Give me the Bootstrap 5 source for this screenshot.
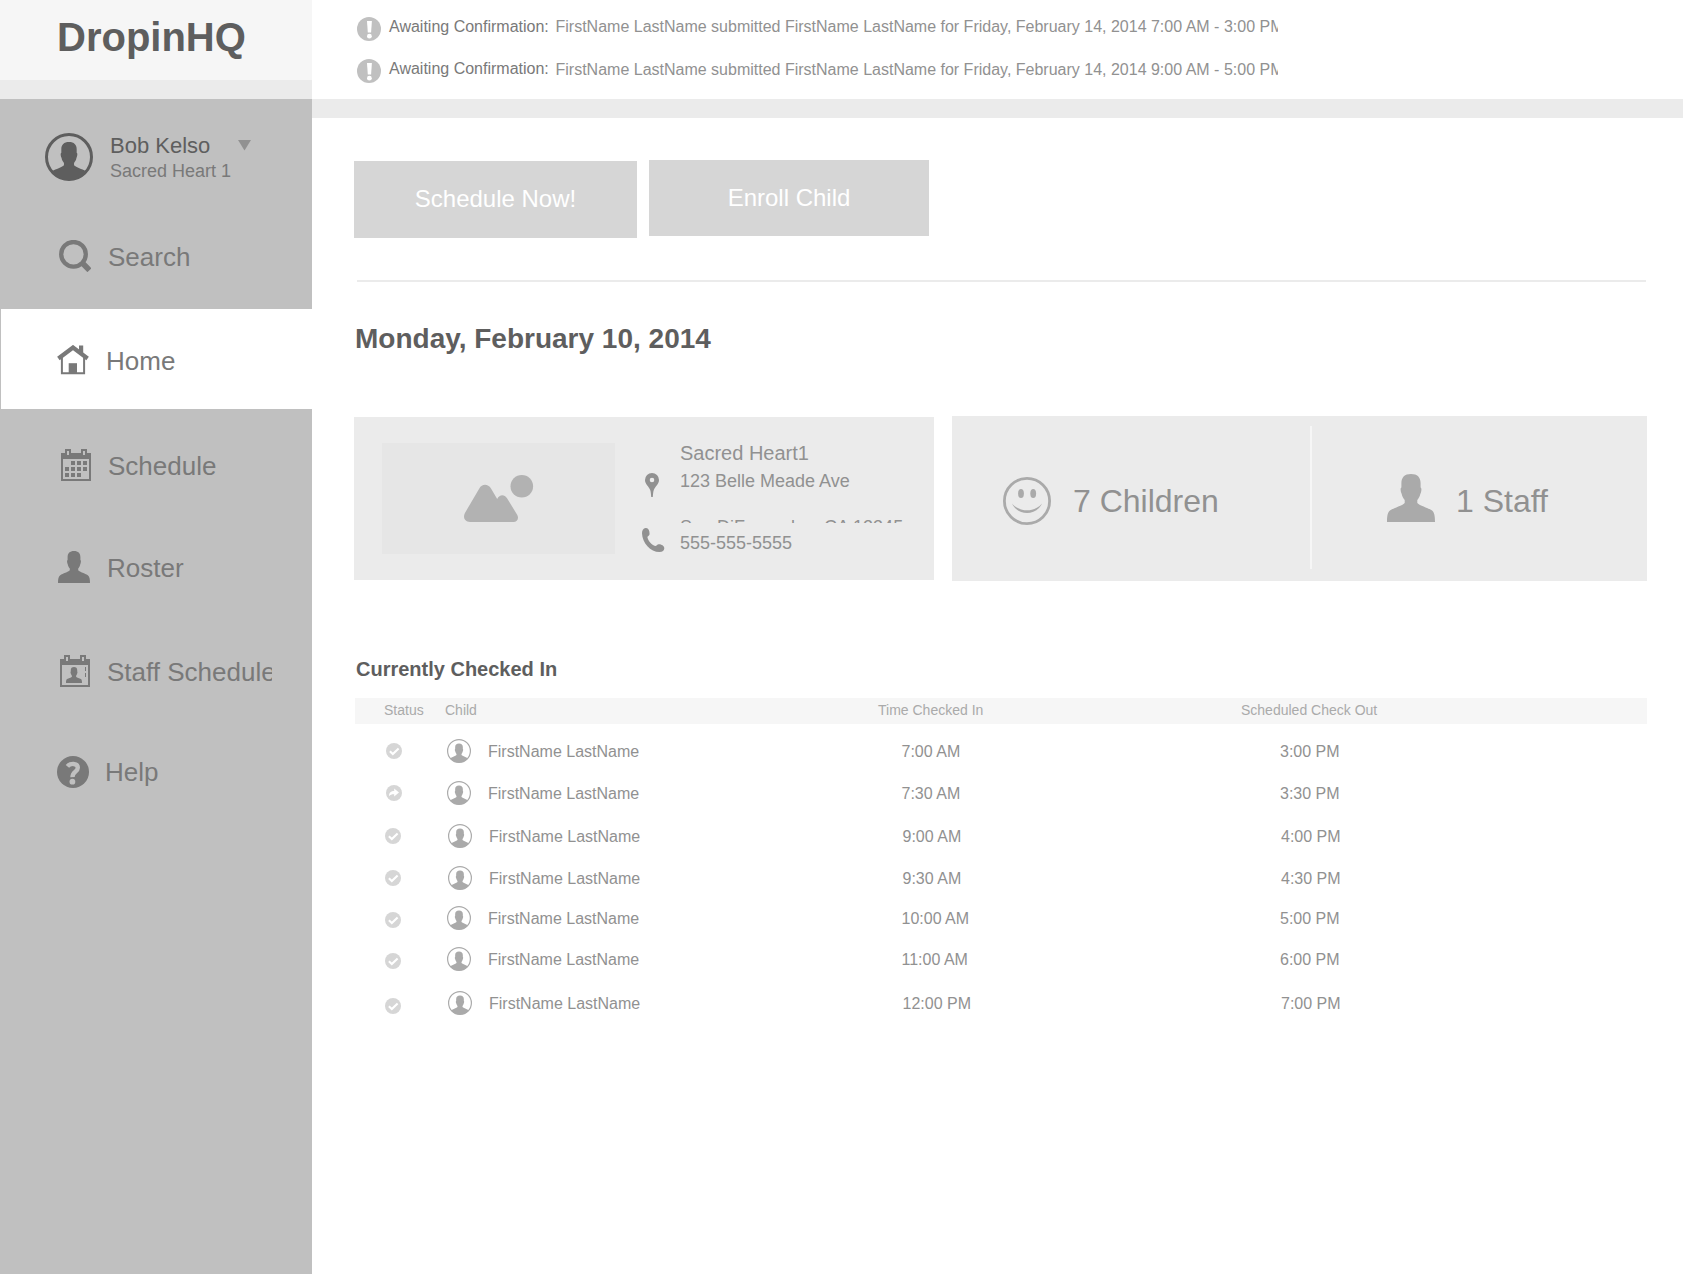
<!DOCTYPE html>
<html lang="en">
<head>
<meta charset="utf-8">
<meta name="viewport" content="width=device-width, initial-scale=1">
<title>DropinHQ</title>
<link href="https://cdn.jsdelivr.net/npm/bootstrap@5.3.0/dist/css/bootstrap.min.css" rel="stylesheet">
<style>
  body { font-family: "Liberation Sans", Arial, sans-serif; color: #919191; background: #fff; }
  svg { display: block; flex: none; }
  /* text sizes, each with its natural line height */
  .t14 { font-size: 14px; line-height: 16px; }
  .t16 { font-size: 16px; line-height: 17px; }
  .t18 { font-size: 18px; line-height: 20px; }
  .t20 { font-size: 20px; line-height: 22px; }
  .t22 { font-size: 22px; line-height: 25px; }
  .t24 { font-size: 24px; line-height: 27px; }
  .t26 { font-size: 26px; line-height: 30px; }
  .t28 { font-size: 28px; line-height: 31px; }
  .t32 { font-size: 32px; line-height: 36px; }
  .t40 { font-size: 40px; line-height: 44px; }
  .ink-dark { color: #5e5e5e; }
  .ink-mid { color: #797979; }

  .sidebar { width: 312px; background: #c0c0c0; }
  .brand { height: 80px; padding: 15px 0 0 57px; background: #f6f6f6; }
  .strip { height: 19px; background: #ebebeb; }
  .user { height: 111px; padding: 34px 0 0 45px; }
  .user-name { margin-left: 17px; }
  .user-site { margin-top: 3px; }
  .caret { margin: 7px 0 0 28px; color: #919191; }

  .side-link { height: 100px; padding: 0 40px 0 var(--x); color: #797979; white-space: nowrap; }
  .side-link:hover { color: #797979; }
  .side-link svg { margin-top: var(--iy); }
  .side-link span { margin: var(--ty) 0 0 var(--gap); overflow: hidden; flex: 1; }
  .l-search { height: 99px; --x: 59px; --iy: 30px; --ty: 32px; --gap: 17px; }
  .l-home { background: #fff; margin-left: 1px; --x: 56px; --iy: 36px; --ty: 37px; --gap: 17px; }
  .l-sched { height: 101px; --x: 61px; --iy: 40px; --ty: 42px; --gap: 17px; }
  .l-roster { height: 102px; --x: 58px; --iy: 41px; --ty: 43px; --gap: 17px; }
  .l-staff { height: 103px; --x: 60px; --iy: 43px; --ty: 45px; --gap: 17px; }
  .l-help { --x: 56.5px; --iy: 40.5px; --ty: 42px; --gap: 16.5px; }

  .notices { height: 99px; padding: 16px 0 0 44.5px; }
  .notice { height: 42px; }
  .notice svg { color: #c0c0c0; margin-top: .5px; }
  .notice-label { width: 166.5px; margin: 2px 0 0 8.5px; }
  .notice-text { width: 722.5px; margin-top: 2px; overflow: hidden; white-space: nowrap; }
  .notice + .notice .notice-text { margin-top: 3px; }

  .content { padding: 42px 36px 0 42px; }
  .actions { gap: 12px; }
  .action { --bs-btn-color: #fff; --bs-btn-bg: #d6d6d6; --bs-btn-border-width: 0; --bs-btn-hover-bg: #cacaca; --bs-btn-hover-color: #fff; --bs-btn-padding-y: 0; --bs-btn-border-radius: 0; }
  .btn.action { font-size: 24px; line-height: 27px; }
  .a-now { width: 283px; height: 77px; margin-top: 1px; padding-bottom: 2px; }
  .a-enroll { width: 280px; height: 76px; padding-bottom: 2px; }
  .rule { height: 2px; margin: 42px 1px 0 3px; background: #ebebeb; }
  .date { margin: 41px 0 0 1px; }

  .panels { margin: 62px 0 0; gap: 18px; }
  .panel { background: #ebebeb; }
  .site { width: 580px; height: 163px; margin-top: 1px; padding: 26px 0 0 28px; }
  .photo { width: 233px; height: 111px; background: #e6e6e6; padding: 14.5px 0 0 82px; }
  .contact { padding-left: 27px; }
  .contact svg { margin-top: 30px; margin-left: 3px; }
  .contact svg + svg { margin-top: 31px; margin-left: 0; }
  .address { padding-left: 15px; margin-top: -1px; white-space: nowrap; }
  .line-a { margin-top: 7px; }
  /* only the tops of the letters show on this line */
  .line-b { height: 6px; margin-top: 26px; overflow: hidden; }
  .line-c { margin-top: 10px; }
  .totals { width: 695px; height: 165px; }
  .total { padding-top: 58px; }
  .total span { margin-top: 9px; }
  .kids { width: 358px; padding-left: 51px; padding-top: 61px; }
  .kids span { margin: 6px 0 0 22px; }
  .staffers { padding-left: 74.5px; }
  .staffers span { margin-left: 21.5px; }
  .split { width: 2px; height: 143px; margin-top: 10px; background: #f6f6f6; }
  .panel svg { color: #b2b2b2; }
  .totals svg { color: #aaa; }
  .contact svg { color: #919191; }

  .list-title { margin: 77px 0 0 2px; }
  .list-head { height: 26px; margin: 18px 0 15px 1px; padding: 4px 0 0 29px; background: #f6f6f6; color: #aaa; }
  .cols { display: grid; grid-template-columns: 61px 433px 363px 1fr; }
  .entry { display: grid; grid-template-columns: 62px 41px 413.5px 378.5px 1fr; height: 42px; padding-left: 31px; }
  .entry > span, .entry > div { margin-top: 4px; }
  .entry > .flag { color: #d6d6d6; padding-left: .5px; }
  .entry > .face { color: #aaa; margin-top: 0; }
  .nudge > :not(.flag) { margin-left: 1px; }
  .nudge > .flag, .late > .flag { margin-left: -.5px; }
  .late > .flag { margin-top: 6px; }
  .h43 { height: 43px; }
  .h40 { height: 40px; }
  .h41 { height: 41px; }
  .h44 { height: 44px; }
  .last > .flag { margin-top: 7px; }
</style>
<script src="https://cdn.jsdelivr.net/npm/bootstrap@5.3.0/dist/js/bootstrap.bundle.min.js"></script>
</head>
<body>
<svg width="0" height="0" class="position-absolute" aria-hidden="true">
  <defs>
    <path id="bust" d="M16 0C11.8 0 9.6 2.2 9.6 6V9C8.8 9.2 8.9 11.5 9.8 13.4C10.1 15 10.9 16.4 11.8 17.4V19.3C10 21.2 5 22.4 2.2 24.2C.4 25.5 0 28 0 32H32C32 28 31.6 25.5 29.8 24.2C27 22.4 22 21.2 20.2 19.3V17.4C21.1 16.4 21.9 15 22.2 13.4C23.1 11.5 23.2 9.2 22.4 9V6C22.4 2.2 20.2 0 16 0Z"/>
    <clipPath id="disc"><circle cx="24" cy="24" r="23.2"/></clipPath>
    <path id="calframe" fill-rule="evenodd" d="M0 4H4V0H10V4H20V0H26V4H30V32H0ZM2 10V30H28V10ZM6 2V6H8V2ZM22 2V6H24V2Z"/>
    <symbol id="face" viewBox="0 0 48 48"><circle cx="24" cy="24" r="22.8" fill="none" stroke="currentColor" stroke-width="2.4"/><g clip-path="url(#disc)"><use href="#bust" transform="translate(4.8 9) scale(1.2)" fill="currentColor"/></g></symbol>
    <symbol id="alert" viewBox="0 0 24 24"><circle cx="12" cy="12" r="12" fill="currentColor"/><path d="M10 3.9H14.9L14.1 15.6H10.8Z" fill="#fff"/><circle cx="12.4" cy="19.2" r="2.4" fill="#fff"/></symbol>
    <symbol id="done" viewBox="0 0 16 16"><circle cx="8" cy="8" r="8" fill="currentColor"/><path d="M3.9 8.3L6.8 11L12.6 5.4" fill="none" stroke="#fff" stroke-width="2.1"/></symbol>
    <symbol id="moved" viewBox="0 0 16 16"><circle cx="8" cy="8" r="8" fill="currentColor"/><path d="M3 11.2C3 7.6 5 6 8.2 6V3.6L13 7.6L8.2 11.6V9.3C6 9.2 4.4 9.6 3 11.2Z" fill="#fff"/></symbol>
  </defs>
</svg>

<div class="d-flex min-vh-100">
  <aside class="sidebar d-flex flex-column flex-shrink-0">
    <div class="brand t40 fw-bold ink-dark">DropinHQ</div>
    <div class="strip"></div>
    <div class="user d-flex align-items-start">
      <svg class="ink-dark" width="48" height="48" viewBox="0 0 48 48"><circle cx="24" cy="24" r="22.5" fill="none" stroke="currentColor" stroke-width="3"/><g clip-path="url(#disc)"><use href="#bust" transform="translate(4.8 9) scale(1.2)" fill="currentColor"/></g></svg>
      <div class="user-name">
        <div class="d-flex"><span class="t22 ink-dark">Bob Kelso</span>
          <svg class="caret" width="13" height="11" viewBox="0 0 13 11"><path d="M0 0H13L6.5 10.6Z" fill="currentColor"/></svg></div>
        <div class="user-site t18 ink-mid">Sacred Heart 1</div>
      </div>
    </div>
    <nav class="nav flex-column flex-nowrap t26">
      <a class="side-link l-search d-flex align-items-start text-decoration-none" href="#">
        <svg width="32" height="32" viewBox="0 0 32 32" fill="none" stroke="currentColor"><circle cx="14.5" cy="14.3" r="12.3" stroke-width="4.3"/><path d="M22.6 22.2L30.4 30.2" stroke-width="5.6"/></svg><span>Search</span></a>
      <a class="side-link l-home d-flex align-items-start text-decoration-none" href="#">
        <svg width="32" height="30" viewBox="0 0 32 30"><path d="M22 .4H26.2V10L22 7Z" fill="currentColor"/><path d="M1.4 13.5L16 2.5L30.6 13.5" fill="none" stroke="currentColor" stroke-width="4.2"/><path d="M4.9 11V28.2H27.1V11" fill="none" stroke="currentColor" stroke-width="2"/><path d="M11.7 18.2H20V28H11.7Z" fill="currentColor"/></svg><span>Home</span></a>
      <a class="side-link l-sched d-flex align-items-start text-decoration-none" href="#">
        <svg width="30" height="32" viewBox="0 0 30 32" fill="currentColor"><use href="#calframe"/><path d="M10 12h4v4h-4zM16 12h4v4h-4zM22 12h4v4h-4zM4 18h4v4H4zM10 18h4v4h-4zM16 18h4v4h-4zM22 18h4v4h-4zM4 24h4v4H4zM10 24h4v4h-4zM16 24h4v4h-4z"/></svg><span>Schedule</span></a>
      <a class="side-link l-roster d-flex align-items-start text-decoration-none" href="#">
        <svg width="32" height="32" viewBox="0 0 32 32" fill="currentColor"><use href="#bust"/></svg><span>Roster</span></a>
      <a class="side-link l-staff d-flex align-items-start text-decoration-none" href="#">
        <svg width="30" height="32" viewBox="0 0 30 32" fill="currentColor"><use href="#calframe"/><use href="#bust" transform="translate(6 12) scale(.5)"/><path d="M25 12h1v4h-1zM25 18h1v4h-1z"/></svg><span>Staff Schedule</span></a>
      <a class="side-link l-help d-flex align-items-start text-decoration-none" href="#">
        <svg width="32" height="32" viewBox="0 0 32 32"><circle cx="16" cy="16" r="16" fill="currentColor"/><path d="M10.4 10.3C13 7.2 20.8 6.6 20.8 11.8C20.8 15.8 15.3 15.6 15.5 21.2" fill="none" stroke="#c0c0c0" stroke-width="4.4"/><circle cx="15.4" cy="25.7" r="2.9" fill="#c0c0c0"/></svg><span>Help</span></a>
    </nav>
  </aside>

  <main class="flex-grow-1">
    <div class="notices">
      <div class="notice d-flex align-items-start">
        <svg width="24" height="24"><use href="#alert"/></svg>
        <div class="notice-label t16 ink-mid">Awaiting Confirmation:</div>
        <div class="notice-text t16">FirstName LastName submitted FirstName LastName for Friday, February 14, 2014 7:00 AM - 3:00 PM</div>
      </div>
      <div class="notice d-flex align-items-start">
        <svg width="24" height="24"><use href="#alert"/></svg>
        <div class="notice-label t16 ink-mid">Awaiting Confirmation:</div>
        <div class="notice-text t16">FirstName LastName submitted FirstName LastName for Friday, February 14, 2014 9:00 AM - 5:00 PM</div>
      </div>
    </div>
    <div class="strip"></div>

    <div class="content">
      <div class="actions d-flex align-items-start">
        <button type="button" class="btn action a-now">Schedule Now!</button>
        <button type="button" class="btn action a-enroll">Enroll Child</button>
      </div>
      <div class="rule"></div>
      <h1 class="date t28 fw-bold ink-dark">Monday, February 10, 2014</h1>

      <div class="panels d-flex align-items-start">
        <section class="panel site d-flex align-items-start">
          <div class="photo">
            <svg width="72" height="80" viewBox="0 0 72 80" fill="currentColor"><circle cx="57.8" cy="28.2" r="11.3"/><path d="M15.3 30.6C18 25.6 24 25.6 27 30.6L33.2 41C35.5 36.2 40.5 36.2 43 40.2L53.3 57C55.2 60.8 53 64 49.5 64H6C1 64 -1.3 60 .8 55.2Z"/></svg>
          </div>
          <div class="contact">
            <svg width="14" height="24" viewBox="0 0 14 24"><path fill="currentColor" fill-rule="evenodd" d="M7 0A7 7 0 0 0 0 7C0 11 3.8 13.5 5.2 17C6 19.5 6 22 6.2 24H7.8C8 22 8 19.5 8.8 17C10.2 13.5 14 11 14 7A7 7 0 0 0 7 0ZM7 4.7A2.3 2.3 0 1 1 7 9.3A2.3 2.3 0 1 1 7 4.7Z"/></svg>
            <svg width="23" height="24" viewBox="0 0 23 24"><path fill="currentColor" d="M3.6 0C1.2.3 0 2.4 0 5.2C.2 15 8.5 24 17.5 24C20.5 24 22.3 22.4 22.3 20.2C22.2 17.6 19.6 16.4 16.9 16.2C15.4 16 14.8 17.8 13.3 18C9.8 17.2 5.8 12.4 5.4 9C5.6 8 7.2 7.7 7.5 6.4C7.8 3 6.6 -.2 3.6 0Z"/></svg>
          </div>
          <div class="address">
            <div class="t20">Sacred Heart1</div>
            <div class="line-a t18">123 Belle Meade Ave</div>
            <div class="line-b t18">San DiFrangeles, CA 12345</div>
            <div class="line-c t18">555-555-5555</div>
          </div>
        </section>
        <section class="panel totals d-flex align-items-start">
          <div class="total kids d-flex align-items-start">
            <svg width="48" height="48" viewBox="0 0 48 48"><circle cx="24" cy="24" r="22.6" fill="none" stroke="currentColor" stroke-width="2.8"/><ellipse cx="18" cy="16.4" rx="2.9" ry="4.5" fill="currentColor"/><ellipse cx="30.2" cy="16.4" rx="2.9" ry="4.5" fill="currentColor"/><path d="M9 26.5C15 39.2 33 39.2 39 26.5C31.5 35.6 16.5 35.6 9 26.5Z" fill="currentColor"/></svg>
            <span class="t32">7 Children</span>
          </div>
          <div class="split"></div>
          <div class="total staffers d-flex align-items-start">
            <svg width="48" height="48" viewBox="0 0 32 32" fill="currentColor"><use href="#bust"/></svg>
            <span class="t32">1 Staff</span>
          </div>
        </section>
      </div>

      <h2 class="list-title mb-0 t20 fw-bold ink-dark">Currently Checked In</h2>
      <div class="list-head cols t14"><span>Status</span><span>Child</span><span>Time Checked In</span><span>Scheduled Check Out</span></div>
      <div class="t16">
        <div class="entry"><div class="flag"><svg width="16" height="16"><use href="#done"/></svg></div><div class="face"><svg width="24" height="24"><use href="#face"/></svg></div><span>FirstName LastName</span><span>7:00 AM</span><span>3:00 PM</span></div>
        <div class="entry h43"><div class="flag"><svg width="16" height="16"><use href="#moved"/></svg></div><div class="face"><svg width="24" height="24"><use href="#face"/></svg></div><span>FirstName LastName</span><span>7:30 AM</span><span>3:30 PM</span></div>
        <div class="entry nudge"><div class="flag"><svg width="16" height="16"><use href="#done"/></svg></div><div class="face"><svg width="24" height="24"><use href="#face"/></svg></div><span>FirstName LastName</span><span>9:00 AM</span><span>4:00 PM</span></div>
        <div class="entry nudge h40"><div class="flag"><svg width="16" height="16"><use href="#done"/></svg></div><div class="face"><svg width="24" height="24"><use href="#face"/></svg></div><span>FirstName LastName</span><span>9:30 AM</span><span>4:30 PM</span></div>
        <div class="entry late h41"><div class="flag"><svg width="16" height="16"><use href="#done"/></svg></div><div class="face"><svg width="24" height="24"><use href="#face"/></svg></div><span>FirstName LastName</span><span>10:00 AM</span><span>5:00 PM</span></div>
        <div class="entry late h44"><div class="flag"><svg width="16" height="16"><use href="#done"/></svg></div><div class="face"><svg width="24" height="24"><use href="#face"/></svg></div><span>FirstName LastName</span><span>11:00 AM</span><span>6:00 PM</span></div>
        <div class="entry nudge last"><div class="flag"><svg width="16" height="16"><use href="#done"/></svg></div><div class="face"><svg width="24" height="24"><use href="#face"/></svg></div><span>FirstName LastName</span><span>12:00 PM</span><span>7:00 PM</span></div>
      </div>
    </div>
  </main>
</div>
</body>
</html>
